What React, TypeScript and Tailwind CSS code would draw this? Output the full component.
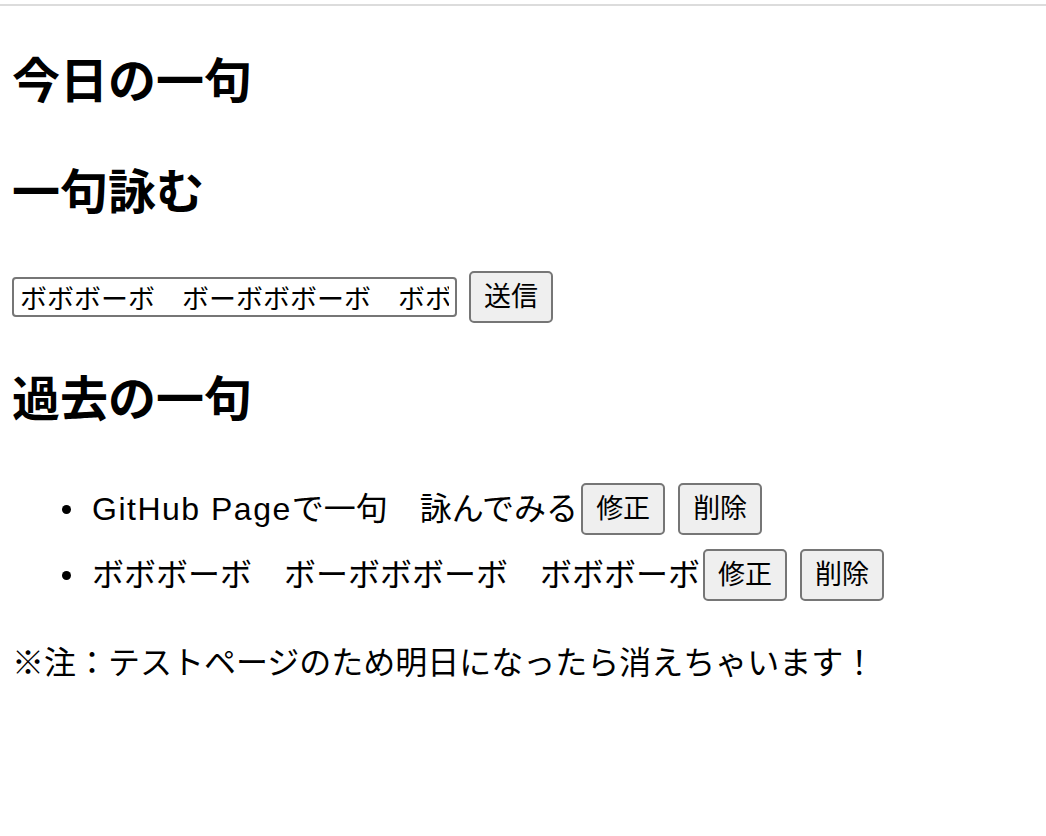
import React from "react";

const font = { fontFamily: '"Liberation Sans", "Noto Sans CJK JP", sans-serif' };

function Btn({ children }: { children: React.ReactNode }) {
  return (
    <button className="h-[52px] px-[13px] bg-[#efefef] border-2 border-[#767676] rounded-[5px] text-[27px] leading-none text-black">
      {children}
    </button>
  );
}

export default function App() {
  return (
    <div className="min-h-[836px] bg-white text-black" style={font}>
      <div className="pt-[4px]">
        <div className="h-[2px] bg-[#dcdcdc]" />
      </div>
      <div className="px-[12px]">
        <h2 className="mt-[48px] text-[48px] font-bold leading-[56px]">今日の一句</h2>
        <h2 className="mt-[55px] text-[48px] font-bold leading-[56px]">一句詠む</h2>
        <div className="mt-[50px] flex items-center gap-[12px] h-[52px]">
          <input
            className="w-[445px] h-[40px] border-2 border-[#767676] rounded-[4px] px-[6px] text-[27px] leading-none outline-none"
            defaultValue="ボボボーボ　ボーボボボーボ　ボボボーボ"
            style={font}
          />
          <Btn>送信</Btn>
        </div>
        <h2 className="mt-[49px] text-[48px] font-bold leading-[56px]">過去の一句</h2>
        <ul className="mt-[55px] pl-[80px] list-none text-[32px]">
          <li className="h-[52px] flex items-center relative">
            <span className="absolute left-[-30px] top-[22px] w-[9px] h-[9px] rounded-full bg-black" />
            <span className="tracking-[1.5px]">GitHub Page</span>
            <span>で一句　詠んでみる</span>
            <span className="ml-[3px] flex gap-[13px]">
              <Btn>修正</Btn>
              <Btn>削除</Btn>
            </span>
          </li>
          <li className="mt-[14px] h-[52px] flex items-center relative">
            <span className="absolute left-[-30px] top-[22px] w-[9px] h-[9px] rounded-full bg-black" />
            <span>ボボボーボ　ボーボボボーボ　ボボボーボ</span>
            <span className="ml-[3px] flex gap-[13px]">
              <Btn>修正</Btn>
              <Btn>削除</Btn>
            </span>
          </li>
        </ul>
        <p className="mt-[42px] text-[32px] leading-[40px]">※注：テストページのため明日になったら消えちゃいます！</p>
      </div>
    </div>
  );
}
